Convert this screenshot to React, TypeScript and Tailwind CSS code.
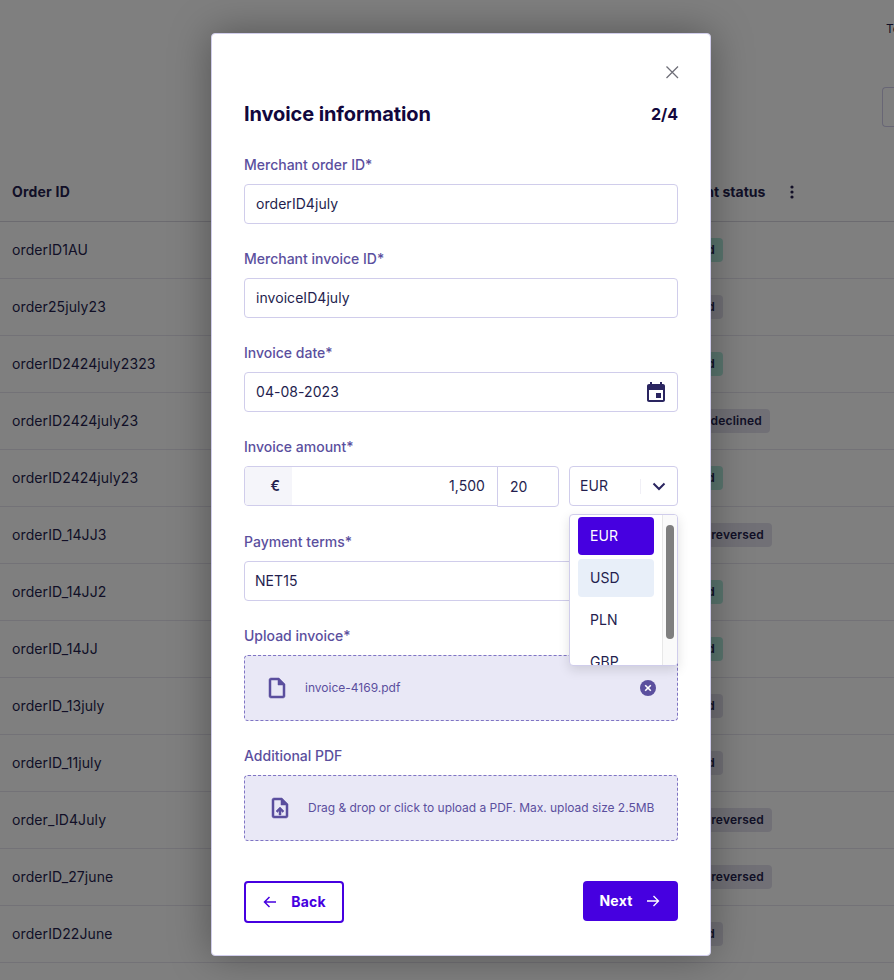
import React from "react";

const rows: [string, string, string][] = [
  ["orderID1AU", "Settled", "w-[62px] bg-[#b4ecdf]"],
  ["order25july23", "Created", "w-[62px] bg-[#e3e1ed]"],
  ["orderID2424july2323", "Settled", "w-[62px] bg-[#b4ecdf]"],
  ["orderID2424july23", "Order declined", "w-[109px] bg-[#e3e1ed]"],
  ["orderID2424july23", "Settled", "w-[62px] bg-[#b4ecdf]"],
  ["orderID_14JJ3", "Order reversed", "w-[111px] bg-[#e3e1ed]"],
  ["orderID_14JJ2", "Settled", "w-[62px] bg-[#b4ecdf]"],
  ["orderID_14JJ", "Settled", "w-[62px] bg-[#b4ecdf]"],
  ["orderID_13july", "Created", "w-[62px] bg-[#e3e1ed]"],
  ["orderID_11july", "Created", "w-[62px] bg-[#e3e1ed]"],
  ["order_ID4July", "Order reversed", "w-[111px] bg-[#e3e1ed]"],
  ["orderID_27june", "Order reversed", "w-[111px] bg-[#e3e1ed]"],
  ["orderID22June", "Created", "w-[62px] bg-[#e3e1ed]"],
];

function Label({ children }: { children: React.ReactNode }) {
  return <div className="h-5 text-sm leading-[22px] font-medium text-[#5b4f9e] mb-2.5">{children}</div>;
}

function Input({ value, icon, tight }: { value: string; icon?: React.ReactNode; tight?: boolean }) {
  return (
    <div
      className={
        "h-10 flex items-center justify-between rounded border border-[#d0cdeb] pr-[9px] text-sm tracking-[0.05px] text-[#241e4e] " +
        (tight ? "pl-[10px]" : "pl-[11px]")
      }
    >
      <span>{value}</span>
      {icon}
    </div>
  );
}

export default function App() {
  return (
    <div className="relative h-[980px] w-[894px] overflow-hidden bg-white font-['Inter',sans-serif] text-[#241e4e]">
      <div className="flex h-[162px] flex-col items-end">
        <div className="mt-[21px] h-4 w-2 overflow-hidden whitespace-nowrap text-xs leading-4">Te</div>
        <div className="mt-[50px] h-10 w-3 rounded-l border border-r-0 border-[#d0cdeb]" />
      </div>
      <div className="flex h-[60px] items-center border-b border-[#d8d6e0] pl-3 text-sm font-bold">
        <span className="w-[647px] tracking-[0.2px]">Order ID</span>
        <span className="w-[107px] whitespace-nowrap">Payment status</span>
        <svg className="ml-[22px]" width="8" height="16" viewBox="0 0 8 16" fill="currentColor">
          <circle cx="4" cy="3" r="1.6" />
          <circle cx="4" cy="8" r="1.6" />
          <circle cx="4" cy="13" r="1.6" />
        </svg>
      </div>
      {rows.map((r, i) => (
        <div key={i} className="flex h-[57px] items-center border-b border-[#e6e4ee] pl-3 text-sm tracking-[0.1px]">
          <span className="w-[649px]">{r[0]}</span>
          <span
            className={
              "flex h-[24px] items-center justify-end whitespace-nowrap rounded pr-2 text-xs font-semibold tracking-[0.2px] " +
              r[2]
            }
          >
            {r[1]}
          </span>
        </div>
      ))}

      {/* overlay */}
      <div className="absolute inset-0 bg-black/50" />

      {/* modal */}
      <div className="absolute left-[211px] top-[33px] h-[923px] w-[500px] rounded border border-[#d0cdeb] bg-white px-8 pt-[30px] shadow-[0_0_40px_rgba(0,0,0,0.35)]">
        <div className="flex justify-end">
          <svg width="16" height="16" viewBox="0 0 16 16" fill="none" stroke="#6f6f78" strokeWidth="1.3" className="mr-[-2px]">
            <path d="M2.5 2.5l11.5 11.5M14 2.5L2.5 14" />
          </svg>
        </div>
        <div className="mt-[20px] flex h-7 items-center justify-between text-[#12073d]">
          <span className="text-xl font-bold tracking-[-0.1px]">Invoice information</span>
          <span className="text-base font-bold">2/4</span>
        </div>

        <div className="mt-[26px]">
          <Label>Merchant order ID*</Label>
          <Input value="orderID4july" />
        </div>
        <div className="mt-6">
          <Label>Merchant invoice ID*</Label>
          <Input value="invoiceID4july" />
        </div>
        <div className="mt-6">
          <Label>Invoice date*</Label>
          <Input
            value="04-08-2023"
            icon={
              <svg width="24" height="24" viewBox="0 0 24 24" fill="#2a2560">
                <path d="M19 4h-1V2h-2v2H8V2H6v2H5c-1.11 0-1.99.9-1.99 2L3 20c0 1.1.89 2 2 2h14c1.1 0 2-.9 2-2V6c0-1.1-.9-2-2-2zm0 16H5V10h14v10zm-7-7h5v5h-5z" />
              </svg>
            }
          />
        </div>

        <div className="mt-6">
          <Label>Invoice amount*</Label>
          <div className="flex text-sm tracking-[0.05px]">
            <div className="flex h-10 w-[254px] overflow-hidden rounded-l border border-[#d0cdeb]">
              <div className="flex w-[47px] items-center justify-end bg-[#f5f5fa] pr-3 font-semibold">€</div>
              <div className="flex flex-1 items-center justify-end pr-3">1,500</div>
            </div>
            <div className="ml-[-1px] flex h-[41px] w-[62px] items-center rounded-r border border-[#d0cdeb] pl-3">20</div>
            <div className="ml-2.5 flex h-10 w-[109px] items-center rounded border border-[#d0cdeb] pl-2.5">
              <span className="w-[60px]">EUR</span>
              <div className="h-[15px] w-px bg-[#f0eff6]" />
              <svg className="ml-[11px]" width="14" height="14" viewBox="0 0 14 14" fill="none" stroke="#2a2560" strokeWidth="2">
                <path d="M1.5 4.5L7 10l5.5-5.5" />
              </svg>
            </div>
          </div>
        </div>

        <div className="mt-[24px]">
          <Label>Payment terms*</Label>
          <Input value="NET15" tight />
        </div>

        <div className="mt-[25px]">
          <div className="h-5 text-sm font-medium leading-5 text-[#5b4f9e] mb-[9px]">Upload invoice*</div>
          <div className="flex h-[66px] items-center rounded border border-dashed border-[#7f74c4] bg-[#e9e8f6] pl-[20px] pr-[21px] text-xs text-[#5b4f9e]">
            <svg width="24" height="24" viewBox="0 0 24 24" fill="#5b4f9e" stroke="#5b4f9e" strokeWidth="0.5">
              <path d="M14 2H6c-1.1 0-1.99.9-1.99 2L4 20c0 1.1.89 2 1.99 2H18c1.1 0 2-.9 2-2V8l-6-6zM6 20V4h7v5h5v11H6z" />
            </svg>
            <span className="ml-[16px] flex-1">invoice-4169.pdf</span>
            <svg width="16" height="16" viewBox="0 0 16 16">
              <circle cx="8" cy="8" r="8" fill="#5b4f9e" />
              <path d="M5.2 5.2l5.6 5.6M10.8 5.2l-5.6 5.6" stroke="#fff" strokeWidth="1.6" />
            </svg>
          </div>
        </div>

        <div className="mt-[25px]">
          <div className="h-5 text-sm font-medium leading-5 text-[#5b4f9e] mb-[9px]">Additional PDF</div>
          <div className="flex h-[66px] items-center rounded border border-dashed border-[#7f74c4] bg-[#e9e8f6] pl-[23px] text-xs text-[#5b4f9e]">
            <svg width="24" height="24" viewBox="0 0 24 24" fill="#5b4f9e" stroke="#5b4f9e" strokeWidth="0.5">
              <path d="M14 2H6c-1.1 0-1.99.9-1.99 2L4 20c0 1.1.89 2 1.99 2H18c1.1 0 2-.9 2-2V8l-6-6zm4 18H6V4h7v5h5v11zM8 15.01l1.41 1.41L11 14.84V19h2v-4.16l1.59 1.59L16 15.01 12.01 11z" />
            </svg>
            <span className="ml-[16px] whitespace-nowrap tracking-[-0.03px]">Drag &amp; drop or click to upload a PDF. Max. upload size 2.5MB</span>
          </div>
        </div>

        <div className="mt-10 flex items-start justify-between text-sm font-bold tracking-[0.2px]">
          <div className="flex h-[42px] w-[100px] items-center justify-center gap-[13px] rounded border-2 border-[#4600e0] text-[#4600e0]">
            <svg width="16" height="16" viewBox="0 0 16 16" fill="none" stroke="currentColor" strokeWidth="1.5">
              <path d="M14 8H2.5M7.5 3L2.5 8l5 5" />
            </svg>
            <span>Back</span>
          </div>
          <div className="flex h-10 w-[95px] items-center justify-center gap-[13px] rounded bg-[#4600e0] text-white">
            <span>Next</span>
            <svg width="16" height="16" viewBox="0 0 16 16" fill="none" stroke="currentColor" strokeWidth="1.3">
              <path d="M2 8h11.5M8.5 3l5 5-5 5" />
            </svg>
          </div>
        </div>
      </div>

      {/* currency dropdown */}
      <div className="absolute left-[569px] top-[514px] flex h-[152px] w-[109px] overflow-hidden rounded border border-[#d0cdeb] bg-white text-sm tracking-[0.05px] shadow-[0_4px_12px_rgba(0,0,0,0.12)]">
        <div className="flex w-[92px] flex-col gap-1 px-2 pt-[2px]">
          <div className="flex h-[38px] flex-none items-center rounded bg-[#4600e0] pl-3 text-white">EUR</div>
          <div className="flex h-[38px] flex-none items-center rounded bg-[#e8eff9] pl-3">USD</div>
          <div className="flex h-[38px] flex-none items-center pl-3">PLN</div>
          <div className="flex h-[38px] flex-none items-center pl-3">GBP</div>
        </div>
        <div className="flex-1 border-l border-[#e8e8e8] bg-[#fafafa] pl-[3px] pt-[10px]">
          <div className="h-[114px] w-2 rounded bg-[#7f7f7f]" />
        </div>
      </div>
    </div>
  );
}
